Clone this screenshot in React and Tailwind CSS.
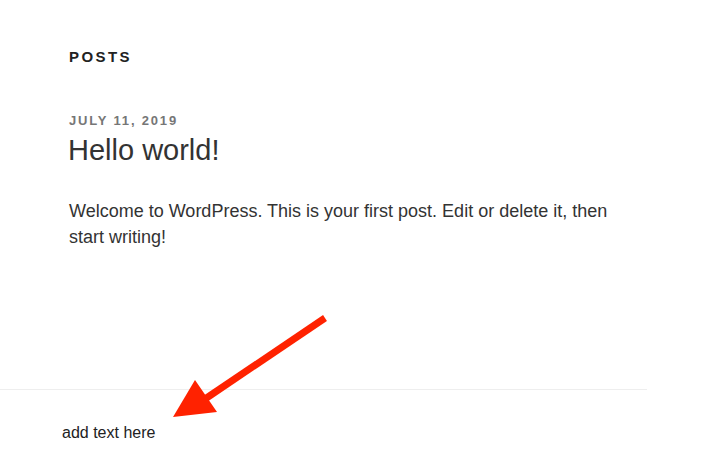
export default function App() {
  return (
    <div className="relative w-[726px] h-[459px] overflow-hidden bg-white font-['Liberation_Sans',Arial,sans-serif] text-[#333]">
      {/* Posts list */}
      <section className="pl-[69px] pt-[49px]">
        <h2 className="text-[15px] leading-[16px] font-bold tracking-[0.16em] text-[#222] uppercase">Posts</h2>

        <article className="mt-[49px]">
          <div className="text-[13px] leading-[14px] font-bold tracking-[0.14em] text-[#767676] uppercase">
            July 11, 2019
          </div>
          <h1 className="mt-[4px] -ml-[1px] text-[29px] leading-[36px] font-light text-[#333]">Hello world!</h1>
          <p className="mt-[30px] w-[570px] text-[18px] leading-[26px] text-[#333]">
            Welcome to WordPress. This is your first post. Edit or delete it, then start writing!
          </p>
        </article>
      </section>

      {/* Footer widget area */}
      <footer className="mt-[139px] w-[647px] border-t border-[#eeeeee] pl-[62px] pt-[33px]">
        <p className="text-[16px] leading-[20px] text-[#222]">add text here</p>
      </footer>

      {/* Annotation arrow */}
      <svg className="absolute left-0 top-0 pointer-events-none" width="726" height="459" viewBox="0 0 726 459">
        <line x1="325" y1="318" x2="205" y2="399" stroke="#ff2200" strokeWidth="7" />
        <polygon points="195,380 173,417 217,412" fill="#ff2200" />
      </svg>
    </div>
  );
}
